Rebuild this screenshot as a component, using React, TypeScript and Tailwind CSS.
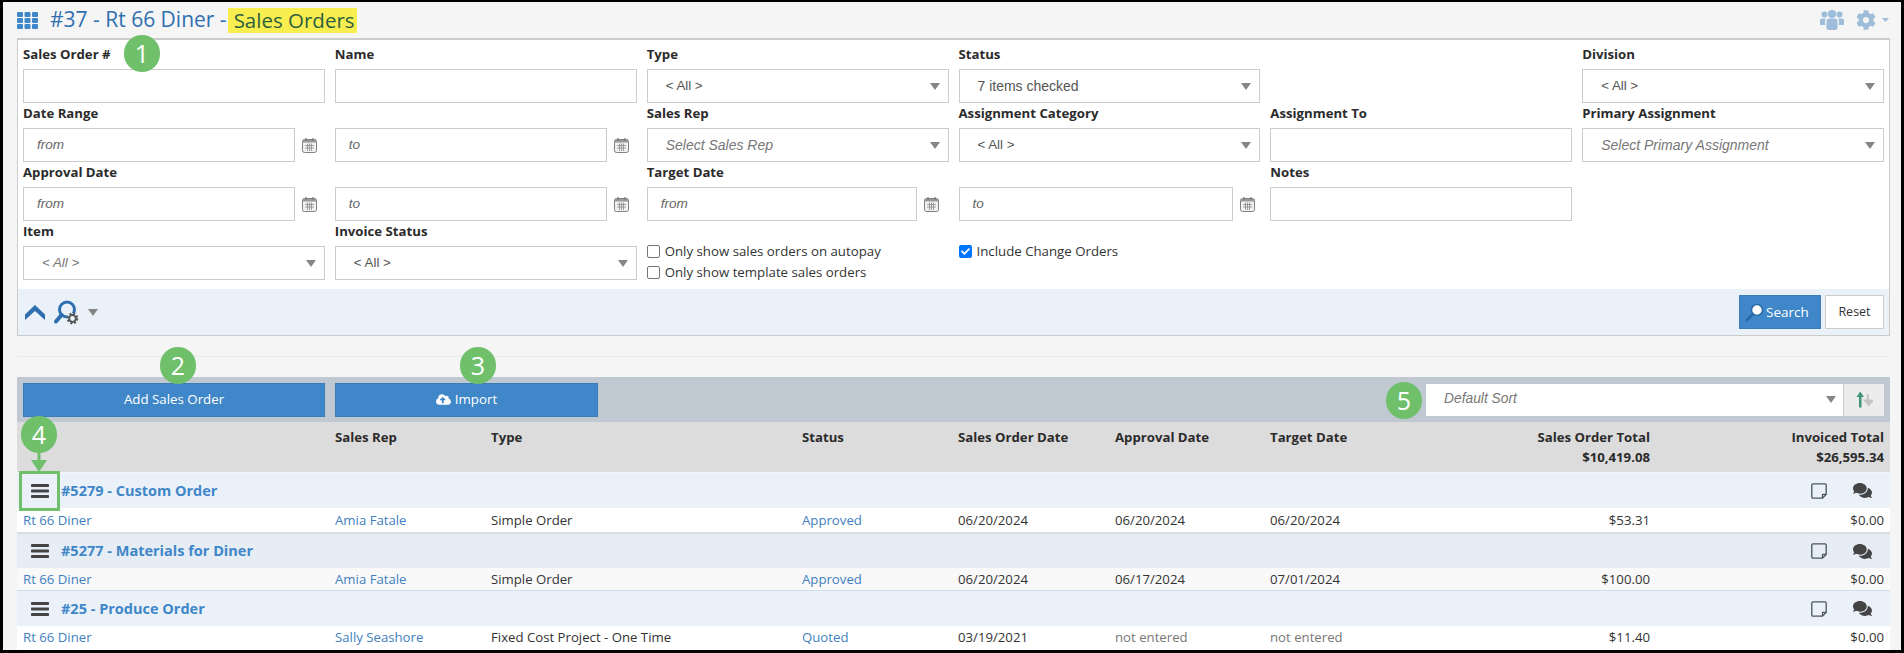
import React from "react";
import { FaCog, FaComments, FaCheck, FaCloudUploadAlt } from "react-icons/fa";

const Tri = () => (
  <svg width="10" height="7" viewBox="0 0 10 7" className="shrink-0">
    <path d="M0 0h10L5 7z" fill="#858585" />
  </svg>
);

const Cal = () => (
  <svg width="15" height="15" viewBox="0 0 15 15" className="ml-[7px] shrink-0">
    <rect x="0.5" y="1.5" width="14" height="13" rx="2" fill="#f1f1f1" stroke="#808080" />
    <rect x="1" y="2" width="13" height="2.5" fill="#9a9a9a" />
    <path d="M4 0v3M11 0v3" stroke="#777" strokeWidth="1.2" />
    <path d="M5.5 5.5v7.5M7.5 5.5v7.5M9.5 5.5v7.5M3 7.5h9M3 10h9" stroke="#8a8a8a" strokeWidth="0.8" />
  </svg>
);

const Label = ({ children }: { children: React.ReactNode }) => (
  <div className="h-[15px] leading-[15px] mb-[7px] font-bold text-[13.2px] text-[#2b2b2b] whitespace-nowrap">{children}</div>
);

const Field = ({ label }: { label: string }) => (
  <div>
    <Label>{label}</Label>
    <div className="h-[34px] bg-white border border-[#cccccc]" />
  </div>
);

const Sel = ({ label, value, italic }: { label: string; value: string; italic?: boolean }) => (
  <div>
    <Label>{label}</Label>
    <div className="h-[34px] bg-white border border-[#cccccc] flex items-center justify-between pl-[18px] pr-[8px]">
      <span className={`font-['Liberation_Sans',sans-serif] ${value.startsWith("<") ? "text-[13.3px]" : "text-[14px]"} ${italic ? "italic text-[#777]" : "text-[#555]"}`}>{value}</span>
      <Tri />
    </div>
  </div>
);

const DateF = ({ label, ph, w }: { label?: string; ph: string; w: string }) => (
  <div>
    <Label>{label ?? "\u00a0"}</Label>
    <div className="flex items-center">
      <div className={`h-[34px] ${w} bg-white border border-[#cccccc] flex items-center pl-[13px] text-[13.6px] italic text-[#666] font-['Liberation_Sans',sans-serif]`}>{ph}</div>
      <Cal />
    </div>
  </div>
);

const Check = ({ text, on }: { text: string; on?: boolean }) => (
  <div className="flex items-center h-[21px] text-[13.25px] text-[#333] whitespace-nowrap">
    {on ? (
      <span className="w-[13px] h-[13px] rounded-[2px] bg-[#0075ff] flex items-center justify-center mr-[5px]">
        <FaCheck className="text-white text-[9px]" />
      </span>
    ) : (
      <span className="w-[13px] h-[13px] rounded-[2px] bg-white border border-[#767676] mr-[5px]" />
    )}
    {text}
  </div>
);

const Badge = ({ n, cls }: { n: string; cls: string }) => (
  <div className={`absolute w-[36px] h-[37px] rounded-full bg-[#70bf6b] text-white text-[25px] flex items-center justify-center ${cls}`}>{n}</div>
);

const Note = () => (
  <svg width="16" height="16" viewBox="0 0 16 16" fill="none">
    <path d="M2 .8h12A1.2 1.2 0 0 1 15.2 2v9.5l-3.7 3.7H2A1.2 1.2 0 0 1 .8 14V2A1.2 1.2 0 0 1 2 .8z" stroke="#4a5560" strokeWidth="1.3" />
    <path d="M11.5 15v-3.2a.5.5 0 0 1 .5-.5h3" stroke="#4a5560" strokeWidth="1.3" />
  </svg>
);

const Burger = () => (
  <svg width="18" height="14" viewBox="0 0 18 14" className="shrink-0">
    <rect y="0" width="18" height="3" rx="0.8" fill="#444" />
    <rect y="5.5" width="18" height="3" rx="0.8" fill="#444" />
    <rect y="11" width="18" height="3" rx="0.8" fill="#444" />
  </svg>
);

const Cell = ({ children, cls = "" }: { children?: React.ReactNode; cls?: string }) => (
  <div className={`whitespace-nowrap ${cls}`}>{children}</div>
);

const cols = "grid grid-cols-[312px_156px_311px_156px_157px_155px_155px_225px_234px]";
const link = "text-[#3f7fc0]";
const muted = "text-[#777]";

const rows = [
  { title: "#5279 - Custom Order", rep: "Amia Fatale", type: "Simple Order", status: "Approved", so: "06/20/2024", ap: "06/20/2024", td: "06/20/2024", total: "$53.31", head: "bg-[#eaf1f9] h-[35px]", body: "bg-white h-[24px] pt-[1px]", line: "h-[2px] bg-[#d9dde2]" },
  { title: "#5277 - Materials for Diner", rep: "Amia Fatale", type: "Simple Order", status: "Approved", so: "06/20/2024", ap: "06/17/2024", td: "07/01/2024", total: "$100.00", head: "bg-[#e6edf5] h-[34px]", body: "bg-[#f9f9f9] h-[22px] pt-[1px]", line: "h-[1px] bg-[#d5dbe6]" },
  { title: "#25 - Produce Order", rep: "Sally Seashore", type: "Fixed Cost Project - One Time", status: "Quoted", so: "03/19/2021", ap: "not entered", td: "not entered", total: "$11.40", head: "bg-[#eaf1f9] h-[35px]", body: "bg-white h-[24px]", line: "" },
];

export default function App() {
  return (
    <div className="relative w-[1904px] h-[653px] overflow-hidden bg-[#f5f5f5] border-[3px] border-black border-t-[2px] font-['Open_Sans',sans-serif]">
      <div className="absolute inset-0 z-10 pointer-events-none">
        <Badge n="1" cls="left-[121px] top-[33px]" />
        <Badge n="2" cls="left-[157px] top-[345px]" />
        <Badge n="3" cls="left-[457px] top-[345px]" />
        <Badge n="4" cls="left-[18px] top-[414px]" />
        <Badge n="5" cls="left-[1383px] top-[380px]" />
        <svg className="absolute left-[26px] top-[449px]" width="20" height="22" viewBox="0 0 20 22">
          <path d="M8.5 0h3v9H18l-8 12L2 9h6.5z" fill="#70bf6b" />
        </svg>
        <div className="absolute left-[16px] top-[469px] w-[41px] h-[40px] border-[3px] border-[#70bf6b]" />
      </div>

      <div className="ml-[14px] mr-[11px]">
        {/* title */}
        <div className="h-[36px] flex items-center justify-between">
          <div className="flex items-center">
            <svg width="21" height="17" viewBox="0 0 21 17" className="mr-[12px] shrink-0" fill="#3f87c8">
              {[0, 7.5, 15].map((x) =>
                [0, 6, 12].map((y) => <rect key={`${x}-${y}`} x={x} y={y} width="6" height="5" rx="1" />)
              )}
            </svg>
            <span className="text-[21px] text-[#2f6faf] whitespace-pre">#37 - Rt 66 Diner -</span>
            <span className="text-[20.5px] text-[#2d5f3f] bg-[#f8ee4f] h-[25px] leading-[25px] pl-[6px] pr-[2px] ml-[1px] whitespace-nowrap">Sales Orders</span>
          </div>
          <div className="flex items-center text-[#9dbdd9] mr-[1px]">
            <svg width="24" height="20" viewBox="0 0 24 20" fill="#9dbdd9" className="mr-[12px]">
              <circle cx="4.5" cy="4.5" r="3" />
              <circle cx="19.5" cy="4.5" r="3" />
              <circle cx="12" cy="4" r="4" />
              <path d="M0 10.5C0 9 1.5 8.5 3 8.5h2.5c-.6 2-.6 4.5 0 6.5H1.5C.5 15 0 14.5 0 13.5zM24 10.5c0-1.5-1.500-2-3-2h-2.500c.6 2 .6 4.500 0 6.500h4c1 0 1.500-.5 1.500-1.500z" />
              <path d="M6.500 11c0-1.500 1-2.500 2.500-2.500h6c1.500 0 2.500 1 2.500 2.500v7c0 1.200-.8 2-2 2h-7c-1.200 0-2-.8-2-2z" />
            </svg>
            <FaCog className="text-[20px] mr-[6px]" />
            <svg width="7" height="4" viewBox="0 0 7 4"><path d="M0 0h7L3.500 4z" fill="#9dbdd9" /></svg>
          </div>
        </div>

        {/* filter panel */}
        <div className="border border-[#cccccc] border-t-2 bg-white h-[298px] flex flex-col">
          <div className="px-[5px] pt-[7px] flex-1 grid grid-cols-6 gap-x-[10px] gap-y-[3px] content-start">
            <Field label="Sales Order #" />
            <Field label="Name" />
            <Sel label="Type" value="< All >" />
            <Sel label="Status" value="7 items checked" />
            <div />
            <Sel label="Division" value="< All >" />

            <DateF label="Date Range" ph="from" w="w-[272px]" />
            <DateF ph="to" w="w-[272px]" />
            <Sel label="Sales Rep" value="Select Sales Rep" italic />
            <Sel label="Assignment Category" value="< All >" />
            <Field label="Assignment To" />
            <Sel label="Primary Assignment" value="Select Primary Assignment" italic />

            <DateF label="Approval Date" ph="from" w="w-[272px]" />
            <DateF ph="to" w="w-[272px]" />
            <DateF label="Target Date" ph="from" w="w-[270px]" />
            <DateF ph="to" w="w-[274px]" />
            <Field label="Notes" />
            <div />

            <Sel label="Item" value="< All >" italic />
            <Sel label="Invoice Status" value="< All >" />
            <div className="pt-[17px]">
              <Check text="Only show sales orders on autopay" />
              <Check text="Only show template sales orders" />
            </div>
            <div className="pt-[17px]">
              <Check text="Include Change Orders" on />
            </div>
          </div>
          <div className="h-[46px] bg-[#eaf1f9] flex items-center justify-between pl-[7px] pr-[5px]">
            <div className="flex items-center">
              <svg width="20" height="15" viewBox="0 0 20 15" fill="#2f6faf" className="mr-[9px]">
                <path d="M0 9.500L10 0l10 9.500V15L10 6 0 15z" />
              </svg>
              <svg width="25" height="25" viewBox="0 0 25 25" fill="none" className="mr-[9px]">
                <circle cx="13" cy="9.500" r="7.500" stroke="#2f6faf" strokeWidth="3" />
                <path d="M7.500 15L2 21.500" stroke="#2f6faf" strokeWidth="4" strokeLinecap="round" />
                <circle cx="18.500" cy="18.500" r="5.500" fill="#eaf1f9" />
                <circle cx="18.500" cy="18.500" r="4.800" fill="none" stroke="#555" strokeWidth="2" strokeDasharray="2 1.770" />
                <circle cx="18.500" cy="18.500" r="3.400" fill="none" stroke="#555" strokeWidth="2" />
              </svg>
              <Tri />
            </div>
            <div className="flex items-center">
              <div className="w-[82px] h-[34px] bg-[#3f87c8] border border-[#3a7cb8] text-white text-[13.500px] flex items-center pl-[5px]">
                <svg width="19" height="19" viewBox="0 0 19 19" fill="none" className="mr-[2px] shrink-0">
                  <circle cx="12" cy="7" r="5.500" fill="#fff" stroke="#2a6aa6" strokeWidth="1.500" />
                  <path d="M7.500 11.500L2 17" stroke="#2a6aa6" strokeWidth="3" strokeLinecap="round" />
                </svg>
                Search
              </div>
              <div className="ml-[4px] w-[59px] h-[34px] bg-white border border-[#cccccc] text-[#333] text-[12.500px] flex items-center justify-center">Reset</div>
            </div>
          </div>
        </div>

        <div className="h-[21px] border-b border-[#ececec]" />
        <div className="h-[20px]" />

        {/* toolbar */}
        <div className="h-[45px] bg-[#c0c8d2] flex items-center pl-[6px] pr-[6px]">
          <div className="w-[302px] h-[34px] bg-[#3f87c8] border border-[#3a7cb8] text-white text-[13.300px] flex items-center justify-center mr-[10px]">Add Sales Order</div>
          <div className="w-[263px] h-[34px] bg-[#3f87c8] border border-[#3a7cb8] text-white text-[13.300px] flex items-center justify-center">
            <FaCloudUploadAlt className="text-[15px] mr-[4px]" />Import
          </div>
          <div className="flex-1" />
          <div className="w-[417px] h-[32px] bg-white flex items-center justify-between pl-[18px] pr-[7px]">
            <span className="text-[13.800px] italic text-[#777] font-['Liberation_Sans',sans-serif]">Default Sort</span>
            <Tri />
          </div>
          <div className="w-[41px] h-[32px] bg-[#ececec] border-l border-[#ccc] flex items-center justify-center">
            <svg width="17" height="17" viewBox="0 0 17 17" fill="none">
              <path d="M3 16.500V6H0.500L4.200 0.500 8 6H5.500v10.500z" fill="#3f9478" />
              <path d="M11.800 3v6.500M9 9.500l3.800 4.500 3.700-4.500z" stroke="#c4c4c4" strokeWidth="2" fill="#c4c4c4" />
            </svg>
          </div>
        </div>

        {/* table header */}
        <div className={`${cols} h-[50px] bg-[#dcdcdc] pl-[6px] pt-[5px] font-bold text-[13.200px] text-[#2b2b2b] leading-[20px]`}>
          <Cell />
          <Cell>Sales Rep</Cell>
          <Cell>Type</Cell>
          <Cell>Status</Cell>
          <Cell>Sales Order Date</Cell>
          <Cell>Approval Date</Cell>
          <Cell>Target Date</Cell>
          <Cell cls="text-right">Sales Order Total<br />$10,419.08</Cell>
          <Cell cls="text-right">Invoiced Total<br />$26,595.34</Cell>
        </div>
        <div className="h-[1px] bg-[#f5f5f5]" />

        {/* rows */}
        {rows.map((r) => (
          <div key={r.title}>
            <div className={`${r.head} flex items-center pl-[14px] pr-[18px]`}>
              <Burger />
              <span className="ml-[12px] font-bold text-[14.500px] text-[#3f87c8] whitespace-nowrap">{r.title}</span>
              <div className="flex-1" />
              <Note />
              <FaComments className="ml-[26px] text-[19px] text-[#444]" />
            </div>
            <div className={`${r.body} ${cols} pl-[6px] items-center text-[13.200px] text-[#333]`}>
              <Cell cls={link}>Rt 66 Diner</Cell>
              <Cell cls={link}>{r.rep}</Cell>
              <Cell>{r.type}</Cell>
              <Cell cls={link}>{r.status}</Cell>
              <Cell>{r.so}</Cell>
              <Cell cls={r.ap === "not entered" ? muted : ""}>{r.ap}</Cell>
              <Cell cls={r.td === "not entered" ? muted : ""}>{r.td}</Cell>
              <Cell cls="text-right">{r.total}</Cell>
              <Cell cls="text-right">$0.00</Cell>
            </div>
            {r.line && <div className={r.line} />}
          </div>
        ))}
      </div>
    </div>
  );
}
